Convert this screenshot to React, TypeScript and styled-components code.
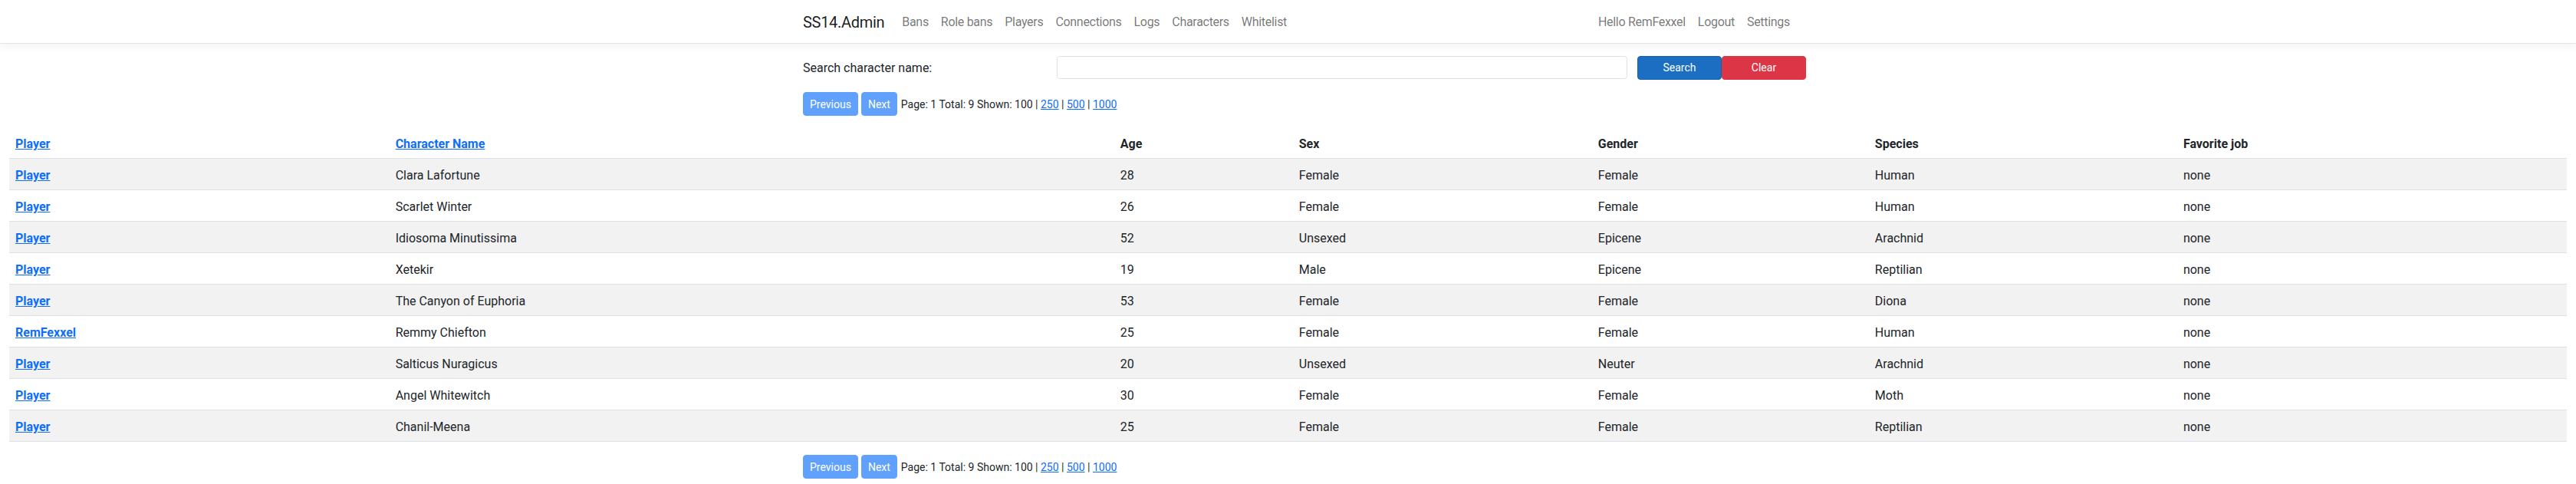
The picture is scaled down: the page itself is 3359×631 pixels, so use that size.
import React from "react";
import styled, { createGlobalStyle } from "styled-components";

const GlobalStyle = createGlobalStyle`
  html, body {
    margin: 0;
    padding: 0;
    background: #ffffff;
  }
  body {
    font-family: "Segoe UI", Roboto, "Liberation Sans", Arial, sans-serif;
    font-size: 16px;
    line-height: 1.5;
    color: #212529;
  }
  * { box-sizing: border-box; }
`;

const NavBar = styled.header`
  background: #ffffff;
  border-bottom: 1px solid #e5e5e5;
  box-shadow: 0 4px 12px rgba(0, 0, 0, 0.05);
`;

const NavInner = styled.nav`
  margin-left: calc(50% - 632.5px);
  width: 1295px;
  display: flex;
  align-items: center;
  padding: 9px 0 7px;
`;

const Brand = styled.a`
  font-size: 20px;
  line-height: 30px;
  padding: 5px 0;
  margin-right: 15px;
  color: rgba(0, 0, 0, 0.9);
  text-decoration: none;
  letter-spacing: -0.3px;
`;

const NavList = styled.ul<{ $grow?: boolean }>`
  list-style: none;
  margin: 0;
  padding: 0;
  display: flex;
  flex-grow: ${(p) => (p.$grow ? 1 : 0)};
`;

const NavLink = styled.a`
  display: block;
  padding: 8px;
  font-size: 16px;
  line-height: 24px;
  letter-spacing: -0.3px;
  color: rgba(0, 0, 0, 0.55);
  text-decoration: none;
`;

const Container = styled.main`
  margin-left: calc(50% - 632.5px);
  width: 1308px;
  margin-top: 16px;
`;

const SearchRow = styled.form`
  display: flex;
  align-items: center;
  height: 31px;
`;

const SearchLabel = styled.label`
  width: 331px;
  font-size: 16px;
  line-height: 24px;
  padding-top: 1px;
`;

const SearchInput = styled.input`
  width: 744px;
  height: 30px;
  margin-right: 13px;
  border: 1px solid #dee2e6;
  border-radius: 4px;
  padding: 4px 8px;
  font: inherit;
  align-self: flex-start;
`;

const ActionButton = styled.button<{ $variant: "primary" | "danger" }>`
  width: 110px;
  height: 31px;
  border: 1px solid ${(p) => (p.$variant === "primary" ? "#1861ac" : "#dc3545")};
  border-radius: 4px;
  background: ${(p) => (p.$variant === "primary" ? "#1b6ec2" : "#dc3545")};
  color: #ffffff;
  font-family: inherit;
  font-size: 14px;
  line-height: 21px;
  padding: 4px 8px;
`;

const Pager = styled.div<{ $top: number }>`
  display: flex;
  align-items: baseline;
  gap: 4px;
  margin-top: ${(p) => p.$top}px;
  font-size: 14px;
  line-height: 21px;
`;

const PagerButton = styled.span`
  display: inline-block;
  padding: 5px 8px 3px;
  border: 1px solid #61a1fe;
  border-radius: 4px;
  background: #61a1fe;
  color: #ffffff;
  font-size: 14px;
  line-height: 21px;
`;

const PagerText = styled.span`
  color: #212529;
  margin-left: 1px;
`;

const SizeLink = styled.a`
  color: #0d6efd;
  text-decoration: underline;
`;

const TableWrap = styled.section`
  padding: 0 12px;
  margin-top: 15px;
`;

const Table = styled.table`
  width: 100%;
  table-layout: fixed;
  border-collapse: collapse;
  margin-bottom: 0;
`;

const HeadCell = styled.th`
  text-align: left;
  font-weight: 700;
  padding: 10px 8px 6px;
  line-height: 24px;
  border-bottom: 1px solid #dee2e6;
  color: #212529;
  white-space: nowrap;
`;

const Row = styled.tr<{ $striped: boolean }>`
  background: ${(p) => (p.$striped ? "#f2f2f2" : "#ffffff")};
`;

const Cell = styled.td`
  padding: 10px 8px 6px;
  line-height: 24px;
  border-bottom: 1px solid #dee2e6;
  white-space: nowrap;
`;

const BoldLink = styled.a`
  color: #0d6efd;
  font-weight: 700;
  text-decoration: underline;
`;

const colWidths = [495.6, 945, 233, 390, 361, 402, 508];

const rows = [
  ["Player", "Clara Lafortune", "28", "Female", "Female", "Human", "none"],
  ["Player", "Scarlet Winter", "26", "Female", "Female", "Human", "none"],
  ["Player", "Idiosoma Minutissima", "52", "Unsexed", "Epicene", "Arachnid", "none"],
  ["Player", "Xetekir", "19", "Male", "Epicene", "Reptilian", "none"],
  ["Player", "The Canyon of Euphoria", "53", "Female", "Female", "Diona", "none"],
  ["RemFexxel", "Remmy Chiefton", "25", "Female", "Female", "Human", "none"],
  ["Player", "Salticus Nuragicus", "20", "Unsexed", "Neuter", "Arachnid", "none"],
  ["Player", "Angel Whitewitch", "30", "Female", "Female", "Moth", "none"],
  ["Player", "Chanil-Meena", "25", "Female", "Female", "Reptilian", "none"],
];

function Pagination({ top }: { top: number }) {
  return (
    <Pager $top={top}>
      <PagerButton>Previous</PagerButton>
      <PagerButton>Next</PagerButton>
      <PagerText>
        Page: 1 Total: 9 Shown: 100 | <SizeLink href="#">250</SizeLink> |{" "}
        <SizeLink href="#">500</SizeLink> | <SizeLink href="#">1000</SizeLink>
      </PagerText>
    </Pager>
  );
}

export default function App() {
  return (
    <>
      <GlobalStyle />
      <NavBar>
        <NavInner>
          <Brand href="#">SS14.Admin</Brand>
          <NavList $grow>
            {["Bans", "Role bans", "Players", "Connections", "Logs", "Characters", "Whitelist"].map((l) => (
              <li key={l}>
                <NavLink href="#">{l}</NavLink>
              </li>
            ))}
          </NavList>
          <NavList>
            {["Hello RemFexxel", "Logout", "Settings"].map((l) => (
              <li key={l}>
                <NavLink href="#">{l}</NavLink>
              </li>
            ))}
          </NavList>
        </NavInner>
      </NavBar>
      <Container>
        <SearchRow onSubmit={(e) => e.preventDefault()}>
          <SearchLabel>Search character name:</SearchLabel>
          <SearchInput type="text" />
          <ActionButton $variant="primary" type="button">Search</ActionButton>
          <ActionButton $variant="danger" type="button">Clear</ActionButton>
        </SearchRow>
        <Pagination top={16} />
      </Container>
      <TableWrap>
        <Table>
          <colgroup>
            {colWidths.map((w, i) => (
              <col key={i} style={{ width: `${w}px` }} />
            ))}
          </colgroup>
          <thead>
            <tr>
              <HeadCell><BoldLink href="#">Player</BoldLink></HeadCell>
              <HeadCell><BoldLink href="#">Character Name</BoldLink></HeadCell>
              <HeadCell>Age</HeadCell>
              <HeadCell>Sex</HeadCell>
              <HeadCell>Gender</HeadCell>
              <HeadCell>Species</HeadCell>
              <HeadCell>Favorite job</HeadCell>
            </tr>
          </thead>
          <tbody>
            {rows.map((r, i) => (
              <Row key={i} $striped={i % 2 === 0}>
                <Cell><BoldLink href="#">{r[0]}</BoldLink></Cell>
                {r.slice(1).map((v, j) => (
                  <Cell key={j}>{v}</Cell>
                ))}
              </Row>
            ))}
          </tbody>
        </Table>
      </TableWrap>
      <Container as="div">
        <Pagination top={17} />
      </Container>
    </>
  );
}
